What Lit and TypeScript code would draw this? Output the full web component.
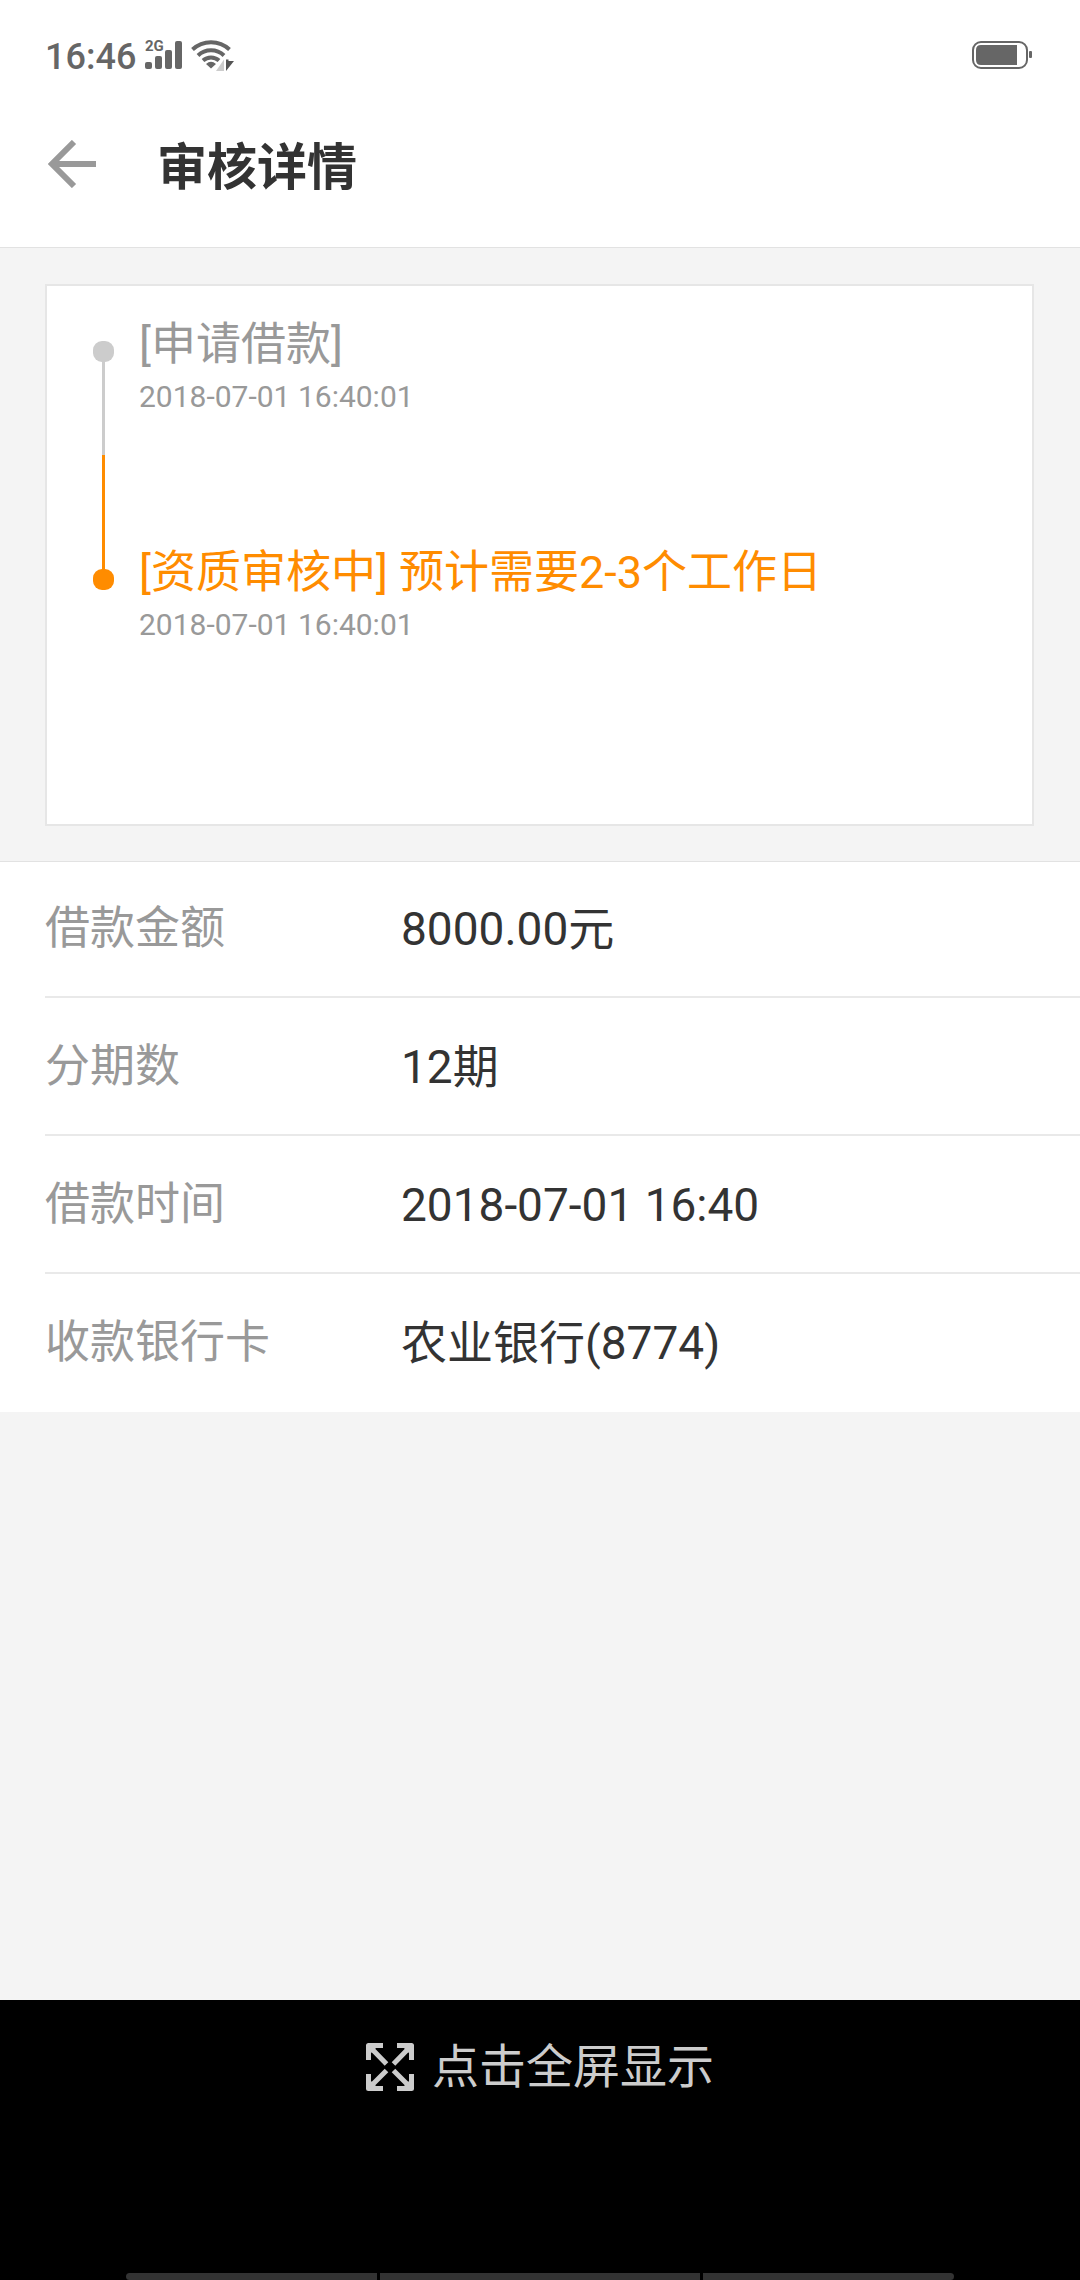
import { LitElement, html, css, svg } from "lit";
import { customElement, property } from "lit/decorators.js";
import { classMap } from "lit/directives/class-map.js";

interface Step {
  title: string;
  time: string;
  active: boolean;
}

interface Detail {
  label: string;
  value: string;
}

const STEPS: Step[] = [
  { title: "[申请借款]", time: "2018-07-01 16:40:01", active: false },
  { title: "[资质审核中] 预计需要2-3个工作日", time: "2018-07-01 16:40:01", active: true },
];

const DETAILS: Detail[] = [
  { label: "借款金额", value: "8000.00元" },
  { label: "分期数", value: "12期" },
  { label: "借款时间", value: "2018-07-01 16:40" },
  { label: "收款银行卡", value: "农业银行(8774)" },
];

@customElement("status-bar")
export class StatusBar extends LitElement {
  static styles = css`
    :host {
      display: flex;
      align-items: center;
      height: 110px;
      padding: 0 47px 0 45px;
      box-sizing: border-box;
      color: #666;
    }
    .time {
      padding-top: 4px;
      font-size: 36px;
      font-weight: 500;
      line-height: 42px;
    }
    .signal {
      margin-left: 9px;
      overflow: visible;
    }
    .wifi {
      margin-left: 9px;
    }
    .battery {
      margin-left: auto;
    }
    .network {
      font-size: 15px;
      font-weight: 700;
    }
  `;

  render() {
    return html`
      <span class="time">16:46</span>
      <svg class="signal" width="37" height="42" viewBox="0 -6 37 42" fill="#666">
        ${svg`<text class="network" x="0" y="11">2G</text>`}
        <rect x="0" y="22" width="7" height="7" rx="2" />
        <rect x="10" y="16" width="7" height="13" rx="2" />
        <rect x="20" y="10" width="7" height="19" rx="2" />
        <rect x="30" y="1" width="7" height="28" rx="2" />
      </svg>
      <svg class="wifi" width="44" height="32" viewBox="0 0 44 32" fill="none" stroke="#666" stroke-width="4">
        <path d="M1.5 10.5A27 27 0 0 1 38.500 10.500" />
        <path d="M7 16.500A19 19 0 0 1 33 16.500" />
        <path d="M12 21.500A12 12 0 0 1 28 21.500" />
        <path d="M15 25Q20 20.500 25 25L20 29.500Z" fill="#666" stroke="none" />
        <path d="M33 20.500V32H25Z" fill="#ccc" stroke="none" />
        <path d="M35 20.500V32L43 22H37.500V20.500Z" fill="#555" stroke="none" />
      </svg>
      <svg class="battery" width="61" height="28" viewBox="0 0 61 28">
        <rect x="1" y="1" width="54" height="26" rx="8" fill="none" stroke="#666" stroke-width="2" />
        <path d="M9 4H45V24H9Q4 24 4 19V9Q4 4 9 4Z" fill="#666" />
        <rect x="57" y="10" width="3" height="7" rx="1" fill="#666" />
      </svg>
    `;
  }
}

@customElement("page-header")
export class PageHeader extends LitElement {
  @property() heading = "";

  static styles = css`
    :host {
      display: flex;
      align-items: center;
      gap: 61px;
      padding: 10px 48px 39px;
      border-bottom: 1px solid #e2e2e2;
    }
    .back {
      display: flex;
      padding: 0;
      border: 0;
      background: none;
    }
    .heading {
      margin: 0;
      padding-top: 8px;
      color: #333;
      font-size: 50px;
      font-weight: 700;
      line-height: 80px;
    }
  `;

  render() {
    return html`
      <button class="back" aria-label="返回">
        <svg width="48" height="48" viewBox="0 0 48 48" fill="none" stroke="#999" stroke-width="6">
          <path d="M26 2L4 24L26 46M4 24H48" />
        </svg>
      </button>
      <h1 class="heading">${this.heading}</h1>
    `;
  }
}

@customElement("review-timeline")
export class ReviewTimeline extends LitElement {
  @property({ attribute: false }) steps: Step[] = [];

  static styles = css`
    :host {
      display: block;
      min-height: 542px;
      border: 2px solid #e6e6e6;
      background: #fff;
      box-sizing: border-box;
    }
    .steps {
      margin: 0;
      padding: 0 46px;
      list-style: none;
    }
    .step {
      display: flex;
      gap: 25px;
      color: #999;
    }
    .rail {
      display: flex;
      flex-direction: column;
      align-items: center;
      width: 21px;
      color: #ccc;
    }
    .lead {
      width: 3px;
      height: 55px;
    }
    .dot {
      width: 21px;
      height: 21px;
      border-radius: 9px;
      background: currentColor;
    }
    .tail {
      flex: 1;
      width: 3px;
      background: currentColor;
    }
    .content {
      padding: 28px 0 38px;
    }
    .title {
      font-size: 45px;
      line-height: 62px;
    }
    .time {
      font-size: 30px;
      line-height: 41px;
    }
    .active .rail,
    .active .title {
      color: #ff8c00;
    }
    .active .lead {
      height: 114px;
      background: currentColor;
    }
    .active .tail {
      background: none;
    }
    .active .content {
      padding-top: 87px;
    }
  `;

  render() {
    return html`
      <ol class="steps">
        ${this.steps.map(
          (step) => html`
            <li class=${classMap({ step: true, active: step.active })}>
              <div class="rail">
                <div class="lead"></div>
                <div class="dot"></div>
                <div class="tail"></div>
              </div>
              <div class="content">
                <div class="title">${step.title}</div>
                <div class="time">${step.time}</div>
              </div>
            </li>
          `
        )}
      </ol>
    `;
  }
}

@customElement("loan-details")
export class LoanDetails extends LitElement {
  @property({ attribute: false }) details: Detail[] = [];

  static styles = css`
    :host {
      display: block;
      padding-left: 45px;
      border-top: 1px solid #e2e2e2;
      background: #fff;
      line-height: 64px;
    }
    .list {
      margin: 0;
    }
    .row {
      display: grid;
      grid-template-columns: 356px 1fr;
      padding: 37px 0 35px;
      border-bottom: 2px solid #e9e9e9;
    }
    .row:first-child {
      padding-top: 35px;
    }
    .row:last-child {
      border-bottom: 0;
      padding-bottom: 37px;
    }
    .label {
      color: #999;
      font-size: 45px;
    }
    .value {
      margin: 0;
      color: #333;
      font-size: 46px;
    }
  `;

  render() {
    return html`
      <dl class="list">
        ${this.details.map(
          (item) => html`
            <div class="row">
              <dt class="label">${item.label}</dt>
              <dd class="value">${item.value}</dd>
            </div>
          `
        )}
      </dl>
    `;
  }
}

@customElement("system-footer")
export class SystemFooter extends LitElement {
  static styles = css`
    :host {
      display: flex;
      flex-direction: column;
      align-items: center;
      justify-content: space-between;
      height: 280px;
      padding: 33px 126px 0;
      box-sizing: border-box;
      background: #000;
    }
    .fullscreen {
      display: flex;
      align-items: center;
      gap: 18px;
      padding: 0;
      border: 0;
      background: none;
      color: #ccc;
      font-family: inherit;
      font-size: 47px;
      line-height: 68px;
    }
    .handles {
      display: grid;
      grid-template-columns: 11fr 14fr 11fr;
      gap: 3px;
      width: 100%;
      height: 7px;
      border-radius: 4px;
      overflow: hidden;
    }
    .handle {
      background: #333;
    }
  `;

  render() {
    return html`
      <button class="fullscreen">
        <svg width="48" height="48" viewBox="0 0 48 48" fill="none" stroke="#ccc" stroke-width="5">
          <path d="M17 2.500H2.500V17M31 2.500H45.500V17M2.500 31V45.500H17M45.500 31V45.500H31" stroke-linejoin="round" />
          <path d="M3 3L20.500 21M45 3L27.500 21M3 45L20.500 27.500M45 45L27.500 27.500" />
          <path d="M3 3H12L3 12ZM45 3H36L45 12ZM3 45H12L3 36ZM45 45H36L45 36Z" fill="#ccc" stroke="none" />
        </svg>
        <span>点击全屏显示</span>
      </button>
      <div class="handles">
        <div class="handle"></div>
        <div class="handle"></div>
        <div class="handle"></div>
      </div>
    `;
  }
}

@customElement("app-root")
export class AppRoot extends LitElement {
  static styles = css`
    :host {
      display: flex;
      flex-direction: column;
      min-height: 100vh;
      background: #f4f4f4;
      font-family: Roboto, "Noto Sans CJK SC", sans-serif;
    }
    .top {
      background: #fff;
    }
    .content {
      flex: 1;
    }
    .progress {
      padding: 36px 46px 35px 45px;
    }
  `;

  render() {
    return html`
      <div class="top">
        <status-bar></status-bar>
        <page-header heading="审核详情"></page-header>
      </div>
      <main class="content">
        <div class="progress">
          <review-timeline .steps=${STEPS}></review-timeline>
        </div>
        <loan-details .details=${DETAILS}></loan-details>
      </main>
      <system-footer></system-footer>
    `;
  }
}
